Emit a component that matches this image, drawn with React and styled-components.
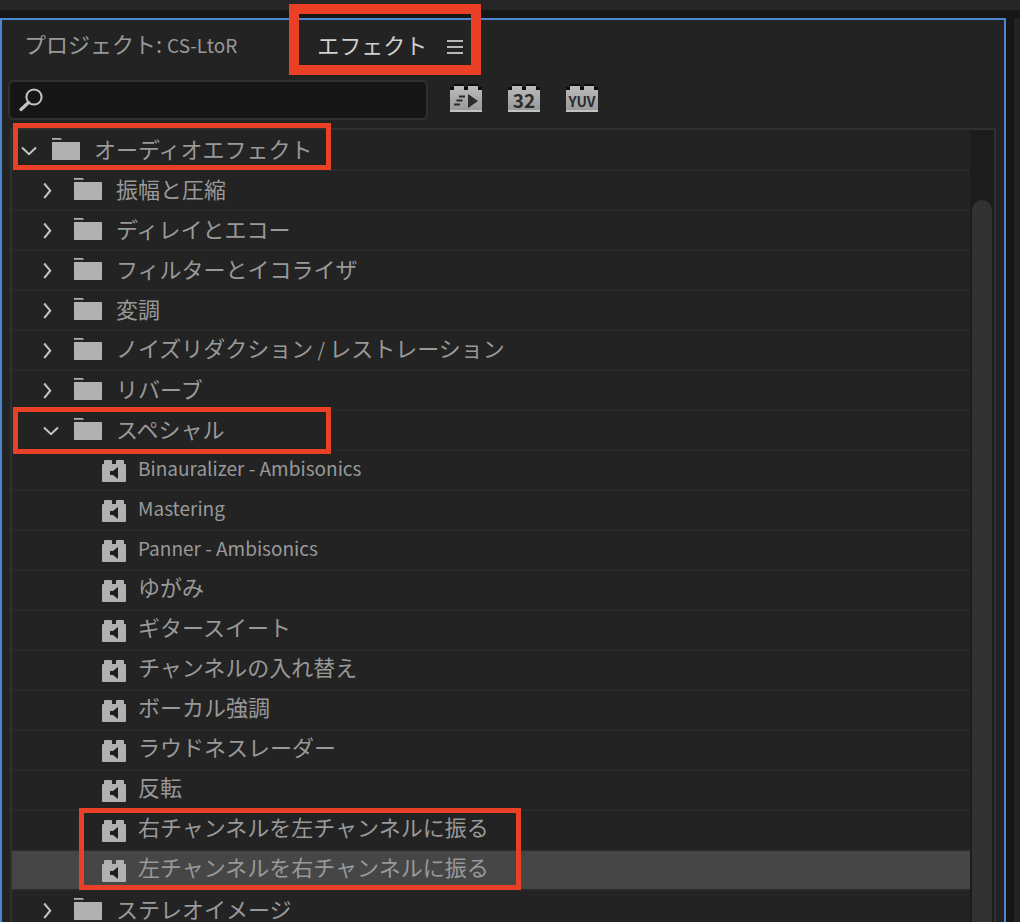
import React from 'react';
import styled, { createGlobalStyle } from 'styled-components';

const GlobalStyle = createGlobalStyle`
  * { box-sizing: border-box; }
  body { margin: 0; background: #161616; }
  body, button, input {
    font-family: 'Noto Sans CJK JP', 'Noto Sans', sans-serif;
    font-size: 22px;
  }
  button { margin: 0; padding: 0; border: 0; background: none; color: inherit; }
  svg { display: block; }
`;

const Workspace = styled.div`
  height: 100vh;
  display: flex;
  flex-direction: column;
  gap: 8px;
  overflow: hidden;
  background: #161616;
`;

const TopStrip = styled.div`
  flex: 0 0 10px;
  background: #262626;
`;

const Columns = styled.div`
  flex: 1;
  min-height: 0;
  display: flex;
  gap: 8px;
`;

const Panel = styled.section`
  flex: 1;
  min-width: 0;
  display: flex;
  flex-direction: column;
  padding: 0 8px;
  border: 2px solid #4b87d1;
  border-bottom: 0;
  background: #232323;
`;

const NextPanel = styled.div`
  flex: 0 0 6px;
  background: #232323;
`;

const Tabs = styled.nav`
  display: flex;
  align-items: center;
  height: 56px;
  padding-left: 14px;
  gap: 80px;
`;

const Tab = styled.button`
  padding-bottom: 8px;
  line-height: 24px;
  white-space: nowrap;
  color: ${(p) => (p.$active ? '#d0d0d0' : '#999')};
`;

const Latin = styled.span`
  font-size: 19px;
`;

const ActiveTab = styled.div`
  position: relative;
  display: flex;
  align-items: center;
  height: 32px;
  gap: 20px;
`;

const Callout = styled.span`
  position: absolute;
  z-index: 1;
  pointer-events: none;
  border: ${(p) => p.$weight}px solid #ea4025;
  top: ${(p) => p.$top}px;
  left: ${(p) => p.$left}px;
  width: ${(p) => p.$width}px;
  height: ${(p) => p.$height}px;
`;

const Toolbar = styled.div`
  display: flex;
  align-items: center;
  gap: 22px;
  height: 52px;
  margin: 0 -2px;
  padding-bottom: 4px;
`;

const SearchBox = styled.label`
  display: flex;
  align-items: center;
  gap: 8px;
  flex: 0 1 420px;
  height: 40px;
  padding-left: 9px;
  border: 2px solid #303030;
  border-radius: 6px;
  background: #161616;
  color: #c4c4c4;
`;

const SearchInput = styled.input`
  flex: 1;
  min-width: 0;
  border: 0;
  outline: 0;
  background: transparent;
  color: #d0d0d0;
`;

const Filters = styled.div`
  display: flex;
  gap: 26px;
  padding-bottom: 4px;
`;

const ListFrame = styled.div`
  flex: 1;
  min-height: 0;
  display: flex;
  border: 2px solid #303030;
  border-bottom: 0;
`;

const Tree = styled.ul`
  flex: 1;
  min-width: 0;
  margin: 0;
  padding: 1px 0 0;
  list-style: none;
`;

const Row = styled.li`
  position: relative;
  display: flex;
  align-items: center;
  height: 40px;
  padding-left: ${(p) => 9 + p.$level * 22}px;
  border-bottom: 2px solid #292929;
  background: ${(p) => (p.$selected ? '#464646' : 'transparent')};
  background-clip: padding-box;
  color: #b1b1b1;
`;

const LeafRow = styled(Row)`
  gap: 12px;
  padding-left: 90px;
  padding-top: 2px;
`;

const Twisty = styled.button`
  width: 16px;
  margin-right: 15px;
`;

const FolderLabel = styled.span`
  padding: 0 0 4px 14px;
  line-height: 24px;
  white-space: nowrap;
  color: #999;
`;

const LeafLabel = styled.span`
  padding-bottom: ${(p) => (p.$latin ? 6 : 10)}px;
  font-size: ${(p) => (p.$latin ? 19 : 22)}px;
  line-height: 24px;
  white-space: nowrap;
  color: #999;
`;

const Track = styled.div`
  flex: 0 0 24px;
  padding: 70px 2px 0;
  background: #1c1c1c;
`;

const Thumb = styled.div`
  height: 100%;
  border-radius: 10px 10px 0 0;
  background: #323232;
`;

const Chevron = ({ open }) => (
  <svg width="16" height="18" viewBox="0 0 16 18" fill="none" stroke="#c4c4c4" strokeWidth="2">
    <path d={open ? 'M1 6.5 8 13.2 15 6.5' : 'M1.2 2.5 7.2 9.7 1.2 17'} />
  </svg>
);

const FolderIcon = () => (
  <svg width="28" height="24" viewBox="0 0 28 24" fill="#b1b1b1">
    <path d="M0 0h8.6l1.6 1.8H0zM0 4h27.4l.6.6v16.8l-.6.6H.6l-.6-.6z" />
  </svg>
);

const AudioEffectIcon = () => (
  <svg width="24" height="22" viewBox="0 0 24 22">
    <path
      fill="#b1b1b1"
      d="M3 0h6a1 1 0 0 1 1 1v3h4V1a1 1 0 0 1 1-1h6a1 1 0 0 1 1 1v3h1a1 1 0 0 1 1 1v16a1 1 0 0 1-1 1H1a1 1 0 0 1-1-1V5a1 1 0 0 1 1-1h1V1a1 1 0 0 1 1-1z"
    />
    <path fill="#1d1d1d" d="M8 11h3l5-4v12l-5-4H8z" />
  </svg>
);

const SearchIcon = () => (
  <svg width="24" height="24" viewBox="0 0 24 24" fill="none" stroke="currentColor">
    <circle cx="15" cy="9" r="7.6" strokeWidth="2" />
    <path d="M9.5 14.5 2 21.5" strokeWidth="3.2" strokeLinecap="round" />
  </svg>
);

const MenuIcon = () => (
  <svg width="16" height="16" viewBox="0 0 16 16" fill="#b8b8b8">
    <path d="M0 0h16v2H0zM0 6h16v2H0zM0 12h16v2H0z" />
  </svg>
);

const BadgeText = styled.text`
  font-family: 'Noto Sans CJK JP', sans-serif;
  font-size: ${(p) => p.$size}px;
  font-weight: 700;
  text-anchor: middle;
  fill: #2b2b2b;
`;

const Brick = ({ id, children }) => (
  <svg width="32" height="28" viewBox="0 0 32 28">
    <defs>
      <linearGradient id={id} x1="0" y1="0" x2="0" y2="1">
        <stop offset="0" stopColor="#bcbcbc" />
        <stop offset="1" stopColor="#969696" />
      </linearGradient>
    </defs>
    <path fill="#0c0c0c" d="M4 0h10v3h4V0h10v3h4v3H0V3h4z" />
    <path fill={`url(#${id})`} d="M4 2h10v4h4V2h10v4h4v22H0V6h4z" />
    <path fill="#c2c2c2" d="M0 26h32v2H0z" />
    {children}
  </svg>
);

const rows = [
  { level: 0, open: true, label: 'オーディオエフェクト', callout: { top: -8, left: 1, width: 318, height: 47 } },
  { level: 1, label: '振幅と圧縮' },
  { level: 1, label: 'ディレイとエコー' },
  { level: 1, label: 'フィルターとイコライザ' },
  { level: 1, label: '変調' },
  {
    level: 1,
    label: 'ノイズリダクション / レストレーション',
    content: <>ノイズリダクション<Latin> / </Latin>レストレーション</>,
  },
  { level: 1, label: 'リバーブ' },
  { level: 1, open: true, label: 'スペシャル', callout: { top: -4, left: 1, width: 318, height: 47 } },
  { leaf: true, latin: true, label: 'Binauralizer - Ambisonics' },
  { leaf: true, latin: true, label: 'Mastering' },
  { leaf: true, latin: true, label: 'Panner - Ambisonics' },
  { leaf: true, label: 'ゆがみ' },
  { leaf: true, label: 'ギタースイート' },
  { leaf: true, label: 'チャンネルの入れ替え' },
  { leaf: true, label: 'ボーカル強調' },
  { leaf: true, label: 'ラウドネスレーダー' },
  { leaf: true, label: '反転' },
  { leaf: true, label: '右チャンネルを左チャンネルに振る', callout: { top: -3, left: 67, width: 442, height: 82 } },
  { leaf: true, label: '左チャンネルを右チャンネルに振る', selected: true },
  { level: 1, label: 'ステレオイメージ' },
];

const Highlight = ({ area, weight }) => (
  <Callout $weight={weight} $top={area.top} $left={area.left} $width={area.width} $height={area.height} />
);

const TreeItem = ({ item }) =>
  item.leaf ? (
    <LeafRow role="treeitem" aria-level={3} aria-selected={!!item.selected} $selected={item.selected}>
      <AudioEffectIcon />
      <LeafLabel $latin={item.latin}>{item.label}</LeafLabel>
      {item.callout && <Highlight area={item.callout} weight={5} />}
    </LeafRow>
  ) : (
    <Row role="treeitem" aria-level={item.level + 1} aria-expanded={!!item.open} $level={item.level}>
      <Twisty type="button" aria-label={item.label}>
        <Chevron open={item.open} />
      </Twisty>
      <FolderIcon />
      <FolderLabel>{item.content || item.label}</FolderLabel>
      {item.callout && <Highlight area={item.callout} weight={5} />}
    </Row>
  );

export default function App() {
  return (
    <Workspace>
      <GlobalStyle />
      <TopStrip />
      <Columns>
        <Panel>
          <Tabs>
            <Tab type="button">プロジェクト: <Latin>CS-LtoR</Latin></Tab>
            <ActiveTab>
              <Tab type="button" $active>エフェクト</Tab>
              <button type="button" aria-label="パネルメニュー"><MenuIcon /></button>
              <Highlight area={{ top: -28, left: -28, width: 192, height: 71 }} weight={10} />
            </ActiveTab>
          </Tabs>
          <Toolbar>
            <SearchBox>
              <SearchIcon />
              <SearchInput type="text" aria-label="検索" />
            </SearchBox>
            <Filters>
              <button type="button" aria-label="高速処理エフェクト">
                <Brick id="brickFast">
                  <path d="M9 12.5h6M6.5 16.5h6M4 20.5h6" stroke="#2b2b2b" strokeWidth="2" />
                  <path d="M18 10v14l10-7z" fill="#2b2b2b" />
                </Brick>
              </button>
              <button type="button" aria-label="32-bit">
                <Brick id="brick32"><BadgeText x="16" y="24" $size={19}>32</BadgeText></Brick>
              </button>
              <button type="button" aria-label="YUV">
                <Brick id="brickYuv"><BadgeText x="16" y="23" $size={14}>YUV</BadgeText></Brick>
              </button>
            </Filters>
          </Toolbar>
          <ListFrame>
            <Tree role="tree">
              {rows.map((item) => <TreeItem key={item.label} item={item} />)}
            </Tree>
            <Track><Thumb /></Track>
          </ListFrame>
        </Panel>
        <NextPanel />
      </Columns>
    </Workspace>
  );
}
